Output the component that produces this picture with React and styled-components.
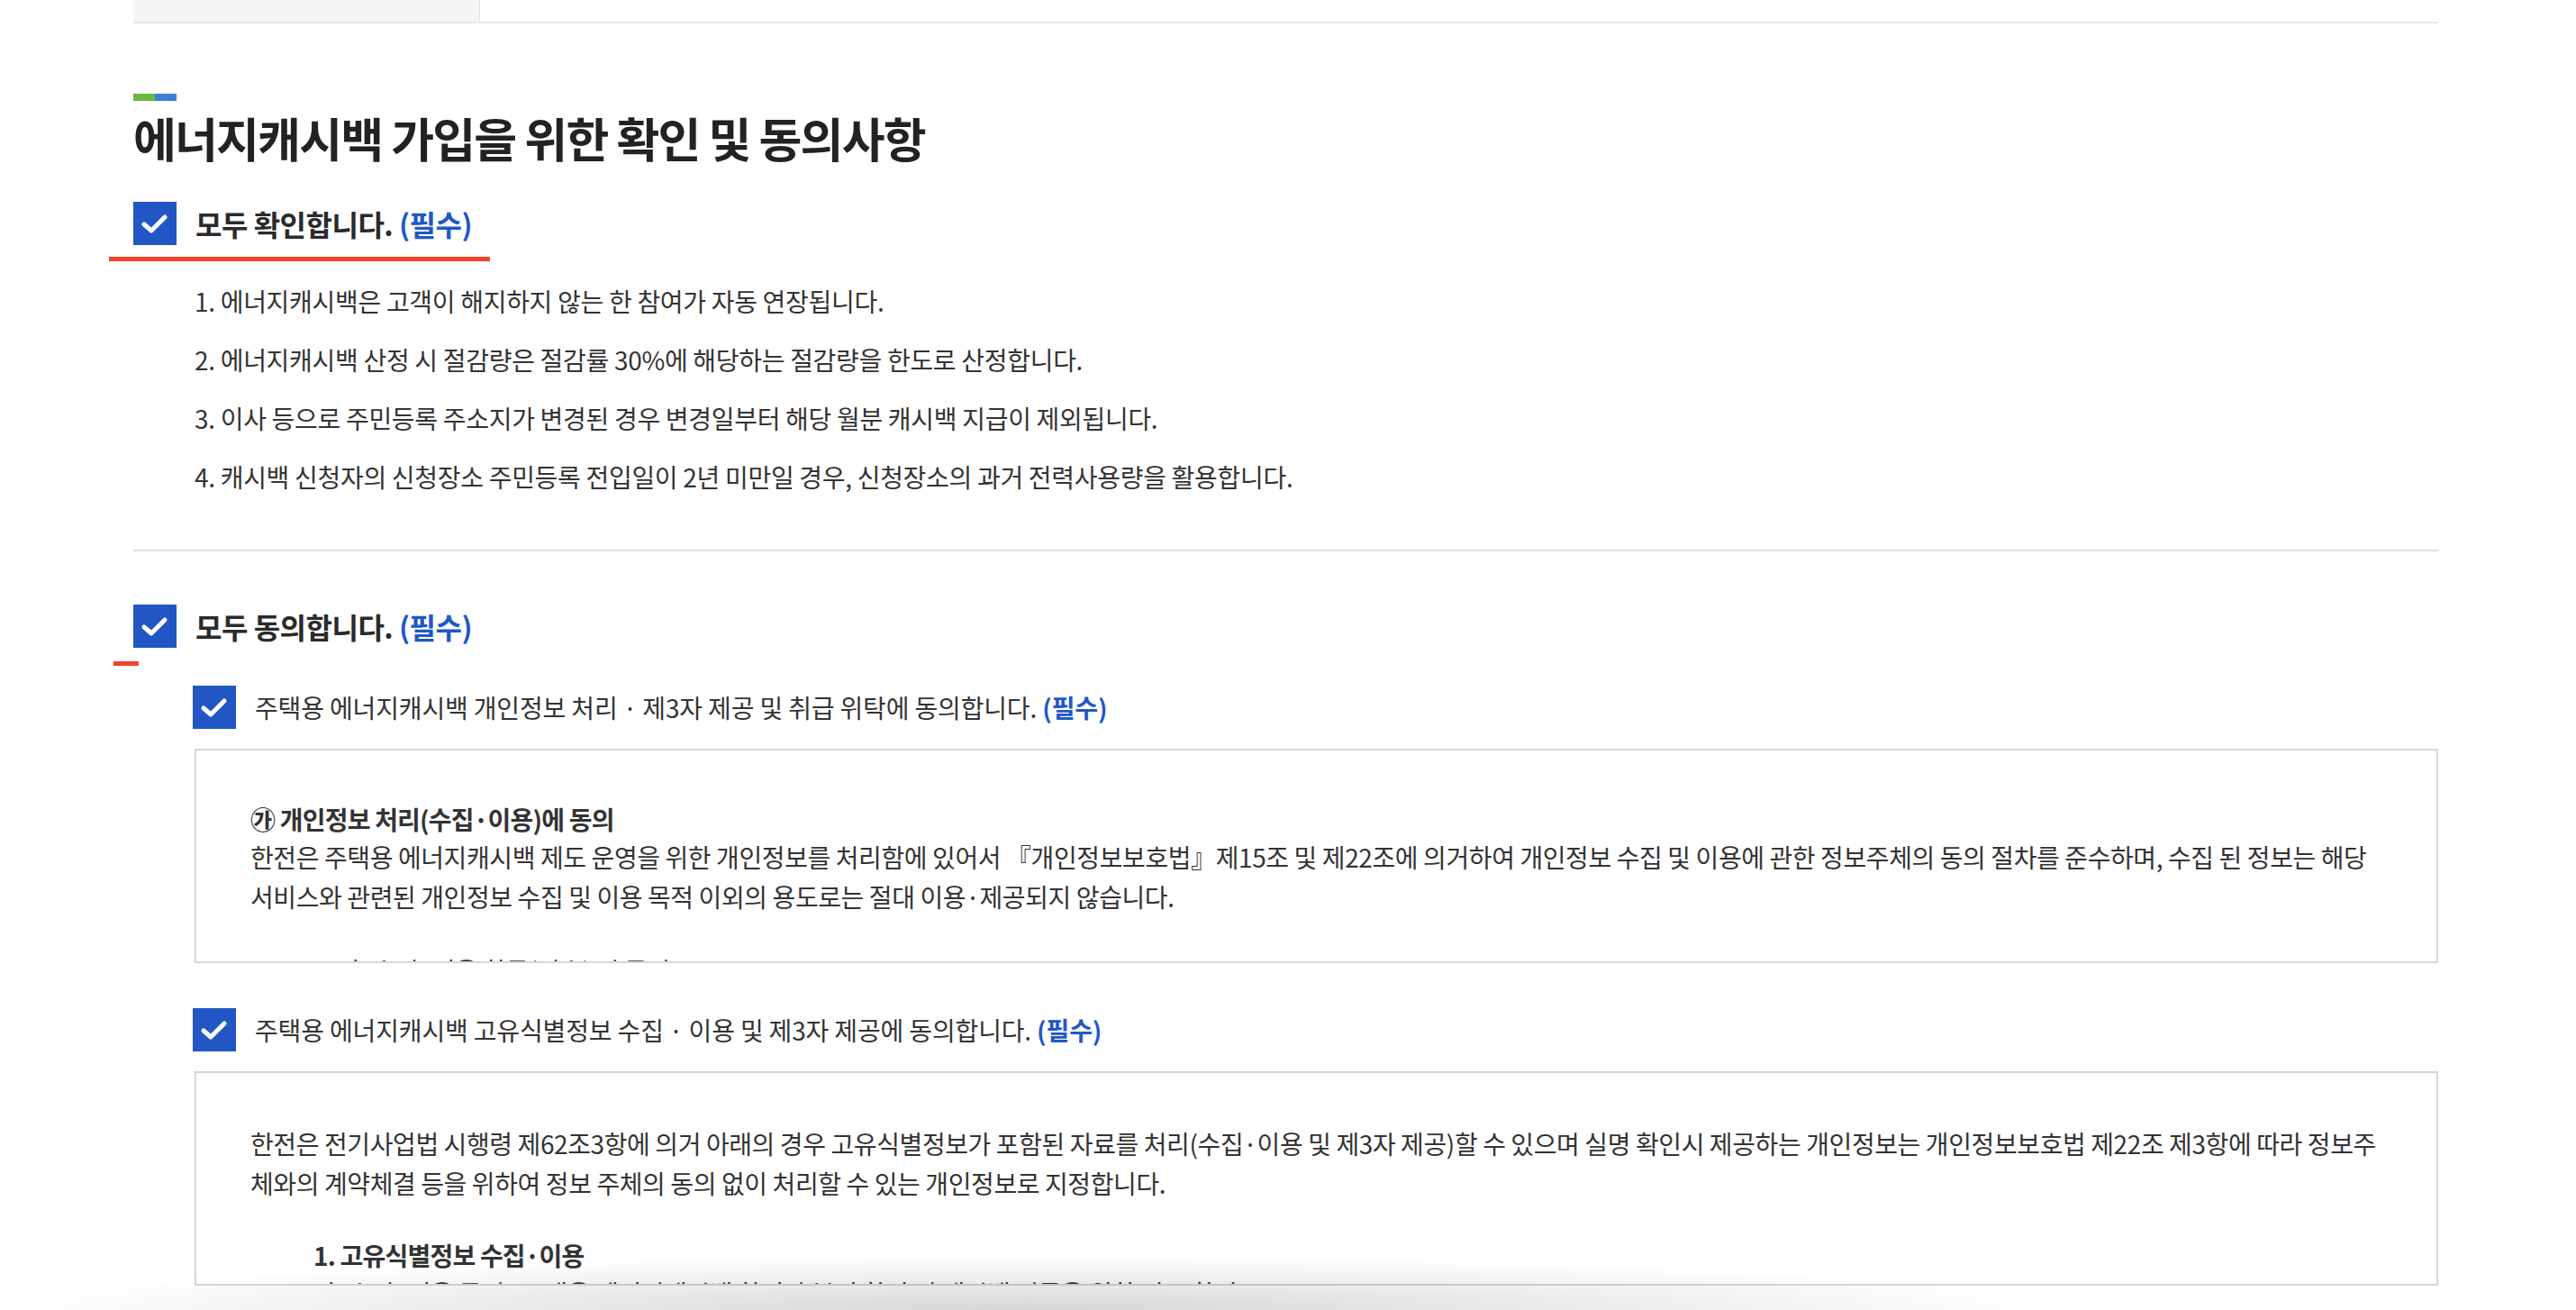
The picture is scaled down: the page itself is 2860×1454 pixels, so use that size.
import React from 'react'
import styled, { createGlobalStyle } from 'styled-components'

const GlobalStyle = createGlobalStyle`
  html, body {
    margin: 0;
    padding: 0;
    background: #fff;
    overflow: hidden;
  }
  body {
    font-family: "Noto Sans CJK KR", "Noto Sans", sans-serif;
    color: #333;
  }
`

const Page = styled.main`
  width: 2559px;
  margin-left: 148px;
  height: 1454px;
`

const TabBar = styled.div`
  display: flex;
  height: 24px;
  border-bottom: 2px solid #e6e6e6;
`

const Tab = styled.div`
  width: 384px;
  background: #f4f5f7;
  border-right: 1px solid #e3e4e6;
`

const Marker = styled.div`
  display: flex;
  margin-top: 78px;
  width: 48px;
  height: 8px;
`

const MarkerPart = styled.span`
  flex: 1;
  background: ${p => p.color};
`

const Title = styled.h2`
  margin: 8px 0 0;
  font-size: 52px;
  line-height: 65px;
  font-weight: 700;
  letter-spacing: -1.8px;
  color: #222;
`

const CheckRow = styled.label`
  display: flex;
  align-items: center;
  gap: 21px;
  margin-top: ${p => p.top}px;
  margin-left: ${p => (p.sub ? '66px' : '0')};
  cursor: pointer;
`

const Box = styled.span`
  flex: none;
  width: 48px;
  height: 48px;
  background: #2256c4;
  display: flex;
  align-items: center;
  justify-content: center;
`

const Label = styled.span`
  font-size: ${p => (p.big ? '32px' : '28px')};
  font-weight: ${p => (p.big ? 700 : 400)};
  letter-spacing: ${p => (p.big ? '-0.5px' : '-0.15px')};
  color: ${p => (p.big ? '#2a2a2a' : '#333')};
  line-height: 48px;
`

const Required = styled.span`
  color: #2158c6;
  font-weight: 700;
`

const RedLine = styled.div`
  margin-left: ${p => p.left}px;
  margin-top: ${p => p.top}px;
  width: ${p => p.w}px;
  height: 5px;
  background: #f0452b;
`

const List = styled.ol`
  list-style: none;
  margin: 25px 0 0;
  padding: 0 0 0 68px;
  display: flex;
  flex-direction: column;
  gap: 26px;
`

const Item = styled.li`
  font-size: 28px;
  line-height: 39px;
  letter-spacing: -0.3px;
  color: #333;
`

const Divider = styled.hr`
  margin: 61px 0 0;
  border: none;
  height: 2px;
  background: #e2e2e2;
`

const TermsBox = styled.div`
  margin: 22px 0 0 68px;
  width: 2491px;
  height: 238px;
  box-sizing: border-box;
  border: 2px solid #d4d7da;
  padding: 56px 10px 0 60px;
  overflow: hidden;
  font-size: 28px;
  line-height: 44px;
  letter-spacing: -0.4px;
  color: #333;
  white-space: nowrap;
`

const TermsHead = styled.p`
  margin: 0;
  font-weight: 700;
  line-height: 40px;
  letter-spacing: -0.8px;
  margin-left: ${p => (p.indent ? '70px' : '0')};
  margin-top: ${p => (p.gap ? `${p.gap}px` : '0')};
`

const TermsText = styled.p`
  margin: 0;
  margin-left: ${p => (p.indent ? `${p.indent}px` : '0')};
  margin-top: ${p => (p.gap ? `${p.gap}px` : '0')};
`

const BottomShade = styled.div`
  position: fixed;
  left: 0;
  right: 0;
  bottom: 0;
  height: 60px;
  pointer-events: none;
  background: radial-gradient(ellipse 40% 100% at 40% 100%, rgba(0, 0, 0, 0.16), rgba(0, 0, 0, 0) 100%);
`

const Check = () => (
  <svg width="48" height="48" viewBox="0 0 48 48">
    <path d="M12 25 L20 32 L35 17" fill="none" stroke="#fff" strokeWidth="5" strokeLinecap="round" strokeLinejoin="round" />
  </svg>
)

const CheckItem = ({ top, sub, big, children }) => (
  <CheckRow top={top} sub={sub}>
    <Box><Check /></Box>
    <Label big={big}>
      {children} <Required>(필수)</Required>
    </Label>
  </CheckRow>
)

const notices = [
  '1. 에너지캐시백은 고객이 해지하지 않는 한 참여가 자동 연장됩니다.',
  '2. 에너지캐시백 산정 시 절감량은 절감률 30%에 해당하는 절감량을 한도로 산정합니다.',
  '3. 이사 등으로 주민등록 주소지가 변경된 경우 변경일부터 해당 월분 캐시백 지급이 제외됩니다.',
  '4. 캐시백 신청자의 신청장소 주민등록 전입일이 2년 미만일 경우, 신청장소의 과거 전력사용량을 활용합니다.',
]

export default function App() {
  return (
    <>
      <GlobalStyle />
      <Page>
        <TabBar>
          <Tab />
        </TabBar>

        <Marker>
          <MarkerPart color="#6bb940" />
          <MarkerPart color="#3b80d6" />
        </Marker>
        <Title>에너지캐시백 가입을 위한 확인 및 동의사항</Title>

        <CheckItem top={39} big>모두 확인합니다.</CheckItem>
        <RedLine left={-27} top={13} w={423} />

        <List>
          {notices.map(n => (
            <Item key={n}>{n}</Item>
          ))}
        </List>

        <Divider />

        <CheckItem top={59} big>모두 동의합니다.</CheckItem>
        <RedLine left={-22} top={15} w={28} />

        <CheckItem top={22} sub>주택용 에너지캐시백 개인정보 처리 · 제3자 제공 및 취급 위탁에 동의합니다.</CheckItem>
        <TermsBox>
          <TermsHead>㉮ 개인정보 처리(수집·이용)에 동의</TermsHead>
          <TermsText>
            한전은 주택용 에너지캐시백 제도 운영을 위한 개인정보를 처리함에 있어서 『개인정보보호법』제15조 및 제22조에 의거하여 개인정보 수집 및 이용에 관한 정보주체의 동의 절차를 준수하며, 수집 된 정보는 해당
            <br />
            서비스와 관련된 개인정보 수집 및 이용 목적 이외의 용도로는 절대 이용·제공되지 않습니다.
          </TermsText>
          <TermsText indent={97} gap={38}>가. 수집·이용 항목(필수) 및 목적</TermsText>
        </TermsBox>

        <CheckItem top={50} sub>주택용 에너지캐시백 고유식별정보 수집 · 이용 및 제3자 제공에 동의합니다.</CheckItem>
        <TermsBox>
          <TermsText>
            한전은 전기사업법 시행령 제62조3항에 의거 아래의 경우 고유식별정보가 포함된 자료를 처리(수집·이용 및 제3자 제공)할 수 있으며 실명 확인시 제공하는 개인정보는 개인정보보호법 제22조 제3항에 따라 정보주
            <br />
            체와의 계약체결 등을 위하여 정보 주체의 동의 없이 처리할 수 있는 개인정보로 지정합니다.
          </TermsText>
          <TermsHead indent gap={38}>1. 고유식별정보 수집·이용</TermsHead>
          <TermsText indent={70}>가. 수집·이용 목적 : 주택용 에너지캐시백 참여자 본인 확인 및 캐시백 지급을 위한 정보 확인</TermsText>
        </TermsBox>
      </Page>
      <BottomShade />
    </>
  )
}
